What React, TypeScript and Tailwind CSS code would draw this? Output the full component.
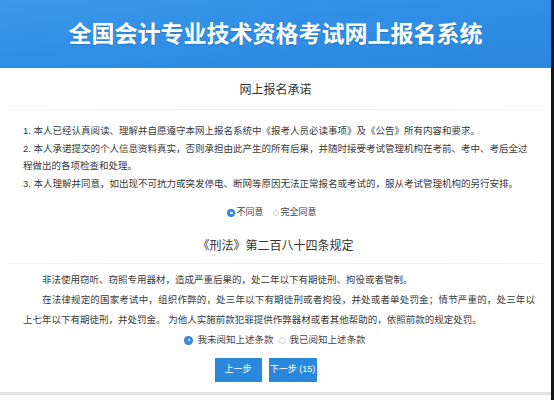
import React from "react";

const FONT = { fontFamily: '"Liberation Sans", "Noto Sans CJK SC", sans-serif' };

function Radio({ checked, size = "w-[7px] h-[7px]" }: { checked?: boolean; size?: string }) {
  return checked ? (
    <span className={`${size} rounded-full bg-[#3b8fe2] ring-1 ring-[#2f7fd0] flex items-center justify-center shrink-0`}>
      <span className="w-[2.5px] h-[2.5px] rounded-full bg-white" />
    </span>
  ) : (
    <span className={`${size} rounded-full border border-[#cfcfd4] bg-white shrink-0`} />
  );
}

function Divider() {
  return <div className="h-px mx-2 bg-linear-to-r from-[#f6f6f8] via-[#ececef] to-[#f6f6f8]" />;
}

export default function App() {
  return (
    <div className="w-[554px] h-[400px] flex bg-white text-[#333]" style={FONT}>
      <main className="w-[551px] h-full flex flex-col">
        <header className="h-[68px] shrink-0 flex items-center justify-center bg-linear-to-br from-[#3a97e9] via-[#2f8ee5] to-[#2a87dd]">
          <h1 className="text-white text-[23px] font-bold [text-shadow:0_1px_1px_rgba(0,0,0,0.15)]">
            全国会计专业技术资格考试网上报名系统
          </h1>
        </header>

        <div className="h-[41px] pt-[3px] flex items-center justify-center text-[12px] text-[#333]">
          网上报名承诺
        </div>
        <Divider />

        <div className="pt-[12px] pl-[23px] pr-[20px] text-[9.5px] leading-[17.5px] text-[#3a3a3a]">
          <p>1. 本人已经认真阅读、理解并自愿遵守本网上报名系统中《报考人员必读事项》及《公告》所有内容和要求。</p>
          <p>
            2. 本人承诺提交的个人信息资料真实，否则承担由此产生的所有后果，并随时接受考试管理机构在考前、考中、考后全过
            <br />
            程做出的各项检查和处理。
          </p>
          <p>3. 本人理解并同意，如出现不可抗力或突发停电、断网等原因无法正常报名或考试的，服从考试管理机构的另行安排。</p>
        </div>

        <div className="mt-[14px] h-[14px] flex items-center justify-center gap-[2px] pr-[6px] text-[9px] text-[#444]">
          <Radio checked size="w-[6px] h-[6px]" />
          <span className="mr-[7px]">不同意</span>
          <Radio size="w-[6px] h-[6px]" />
          <span>完全同意</span>
        </div>

        <div className="h-[43px] pt-[9px] flex items-center justify-center text-[12px] text-[#333]">
          《刑法》第二百八十四条规定
        </div>
        <Divider />

        <div className="mt-[6px] pl-[23px] pr-[16px] text-[9.5px] leading-[20px] text-justify text-[#3a3a3a]">
          <p className="indent-[19px]">
            非法使用窃听、窃照专用器材，造成严重后果的，处二年以下有期徒刑、拘役或者管制。
          </p>
          <p className="indent-[19px]">
            在法律规定的国家考试中，组织作弊的，处三年以下有期徒刑或者拘役，并处或者单处罚金；情节严重的，处三年以上七年以下有期徒刑，并处罚金。 为他人实施前款犯罪提供作弊器材或者其他帮助的，依照前款的规定处罚。
          </p>
        </div>

        <div className="mt-[3px] h-[14px] flex items-center justify-center text-[9.5px] text-[#444]">
          <Radio checked />
          <span className="ml-[5px] mr-[5px]">我未阅知上述条款</span>
          <Radio />
          <span className="ml-[4px]">我已阅知上述条款</span>
        </div>

        <div className="mt-[11px] flex justify-center gap-[7px] pr-[20px]">
          <button className="w-[47px] h-[24px] bg-[#2a88dc] text-white text-[9px]">上一步</button>
          <button className="w-[48px] h-[24px] bg-[#2a88dc] text-white text-[9px]">下一步 (15)</button>
        </div>

        <div className="flex-1" />
        <div className="h-[3px] bg-[#e3e3e6]" />
        <div className="h-[5px] bg-[#fbfbfc]" />
      </main>
      <div className="w-[3px] h-full bg-[#161616]" />
    </div>
  );
}
